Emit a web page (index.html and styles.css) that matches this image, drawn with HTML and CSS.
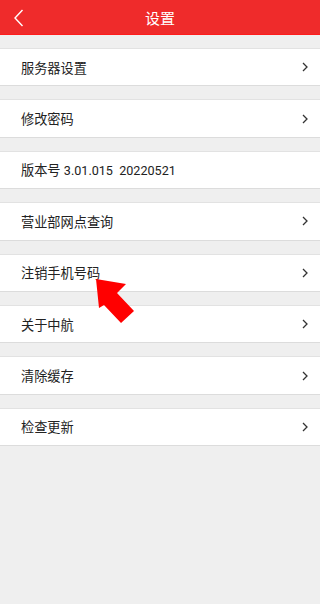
FILE: index.html
```html
<!DOCTYPE html>
<html lang="zh">
<head>
<meta charset="utf-8">
<link rel="stylesheet" href="styles.css">
</head>
<body>
<header class="topbar">
  <svg class="back" width="12" height="20" viewBox="0 0 12 20"><polyline points="9.5,2 2,10 9.5,18" fill="none" stroke="#fff" stroke-width="1.4"/></svg>
  <h1 class="title">设置</h1>
</header>
<main class="list">
  <div class="row"><span>服务器设置</span><svg class="chev" width="6" height="10" viewBox="0 0 6 10"><polyline points="1,1 5,5 1,9" fill="none" stroke="#333" stroke-width="1.3"/></svg></div>
  <div class="row"><span>修改密码</span><svg class="chev" width="6" height="10" viewBox="0 0 6 10"><polyline points="1,1 5,5 1,9" fill="none" stroke="#333" stroke-width="1.3"/></svg></div>
  <div class="row"><span>版本号 <span class="num">3.01.015&nbsp;&nbsp;20220521</span></span></div>
  <div class="row"><span>营业部网点查询</span><svg class="chev" width="6" height="10" viewBox="0 0 6 10"><polyline points="1,1 5,5 1,9" fill="none" stroke="#333" stroke-width="1.3"/></svg></div>
  <div class="row"><span>注销手机号码</span><svg class="chev" width="6" height="10" viewBox="0 0 6 10"><polyline points="1,1 5,5 1,9" fill="none" stroke="#333" stroke-width="1.3"/></svg></div>
  <div class="row"><span>关于中航</span><svg class="chev" width="6" height="10" viewBox="0 0 6 10"><polyline points="1,1 5,5 1,9" fill="none" stroke="#333" stroke-width="1.3"/></svg></div>
  <div class="row"><span>清除缓存</span><svg class="chev" width="6" height="10" viewBox="0 0 6 10"><polyline points="1,1 5,5 1,9" fill="none" stroke="#333" stroke-width="1.3"/></svg></div>
  <div class="row"><span>检查更新</span><svg class="chev" width="6" height="10" viewBox="0 0 6 10"><polyline points="1,1 5,5 1,9" fill="none" stroke="#333" stroke-width="1.3"/></svg></div>
</main>
<svg class="pointer" width="320" height="604" viewBox="0 0 320 604">
  <polygon points="96,279 126,284 117,293 134,311 121,323 104,305 99,308" fill="#ff0000"/>
</svg>
</body>
</html>
```
FILE: styles.css
```css
html, body {
  margin: 0;
  padding: 0;
}
body {
  width: 320px;
  min-height: 604px;
  background: #efefef;
  font-family: Roboto, "Noto Sans CJK SC", sans-serif;
  position: relative;
}
.topbar {
  height: 34px;
  background: #ef2b2b;
  border-bottom: 1px solid #ff1c1c;
  display: flex;
  align-items: center;
  justify-content: center;
  position: relative;
}
.back {
  position: absolute;
  left: 13px;
  top: 8px;
}
.title {
  margin: 0;
  font-size: 15px;
  font-weight: normal;
  color: #fff;
}
.list {
  padding-top: 13px;
  display: flex;
  flex-direction: column;
  gap: 13px;
}
.row {
  height: 38.4px;
  box-sizing: border-box;
  background: #fff;
  border-top: 1px solid #e2e2e2;
  border-bottom: 1px solid #dcdcdc;
  display: flex;
  align-items: center;
  justify-content: space-between;
  padding: 0 12px 0 21px;
  font-size: 13.2px;
  color: #222;
}
.num {
  font-size: 12.6px;
}
.chev {
  display: block;
}
.pointer {
  position: absolute;
  left: 0;
  top: 0;
  pointer-events: none;
}
```
